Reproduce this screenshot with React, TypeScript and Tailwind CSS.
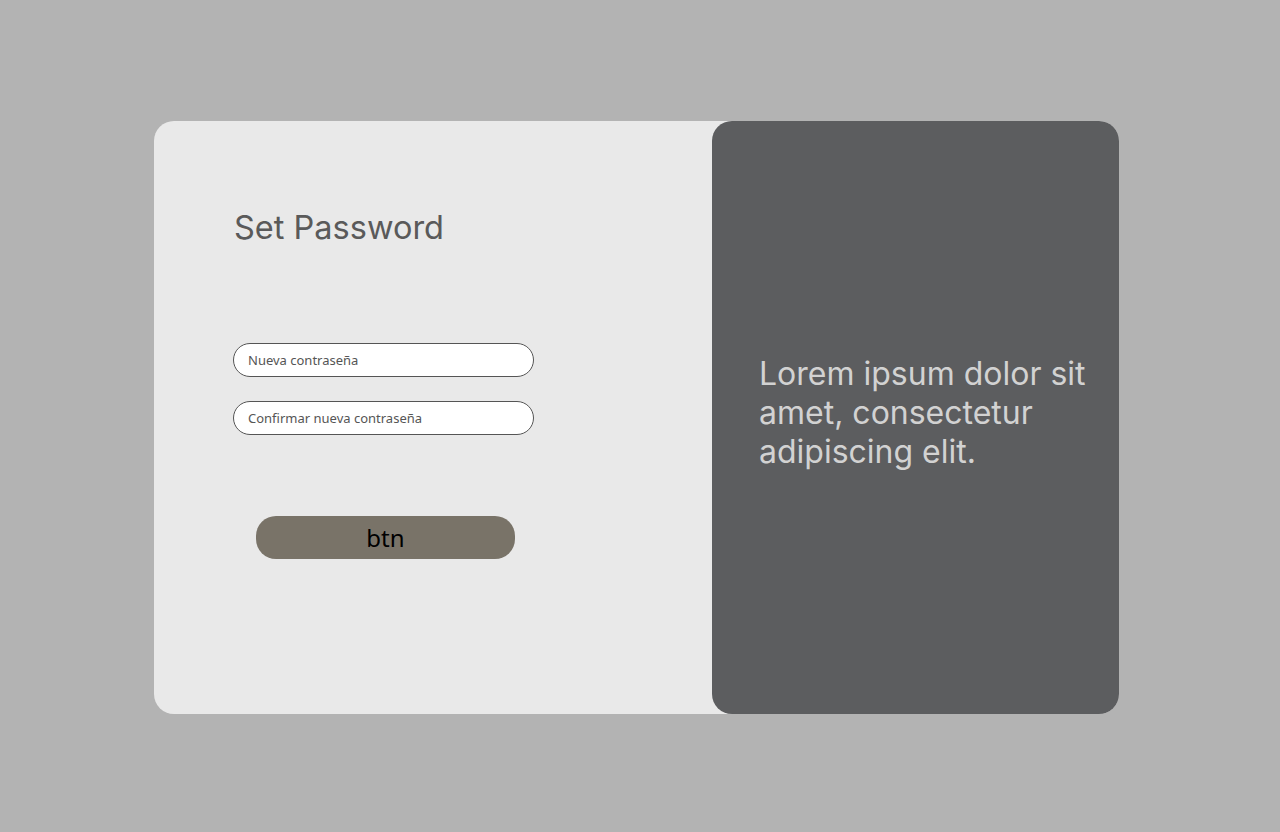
import React from "react";

export default function App() {
  return (
    <div className="min-h-[832px] w-full bg-[#b3b3b3] flex pl-[154px] pt-[121px] font-[Inter,'Noto_Sans',sans-serif]">
      <div className="flex w-[965px] h-[593px] rounded-[20px] bg-[#e9e9e9]">
        <div className="w-[558px] pl-[79px] pt-[87px] flex flex-col">
          <h1 className="ml-[1px] text-[32.5px] leading-[39px] text-[#5a5a5a] font-normal font-[Inter,sans-serif]">Set Password</h1>
          <div className="w-[301px] flex flex-col mt-[96px]">
            <input
              className="h-[34px] w-[301px] rounded-full border border-[#555] bg-white px-[14px] text-[13px] text-[#555] placeholder:text-[#555] outline-none font-['Noto_Sans',sans-serif]"
              placeholder="Nueva contraseña"
            />
            <input
              className="h-[34px] w-[301px] rounded-full border border-[#555] bg-white px-[14px] text-[13px] text-[#555] placeholder:text-[#555] outline-none mt-[24px] font-['Noto_Sans',sans-serif]"
              placeholder="Confirmar nueva contraseña"
            />
            <button className="mt-[81px] ml-[23px] h-[43px] w-[259px] rounded-[20px] bg-[#797368] text-[24px] text-black font-['Noto_Sans',sans-serif]">
              btn
            </button>
          </div>
        </div>
        <div className="w-[407px] h-full rounded-[20px] bg-[#5c5d5f] flex items-center pl-[47px] pb-[10px]">
          <p className="w-[340px] text-[32px] leading-[39px] text-[#d2d2d2] font-[Inter,sans-serif]">
            Lorem ipsum dolor sit amet, consectetur adipiscing elit.
          </p>
        </div>
      </div>
    </div>
  );
}
